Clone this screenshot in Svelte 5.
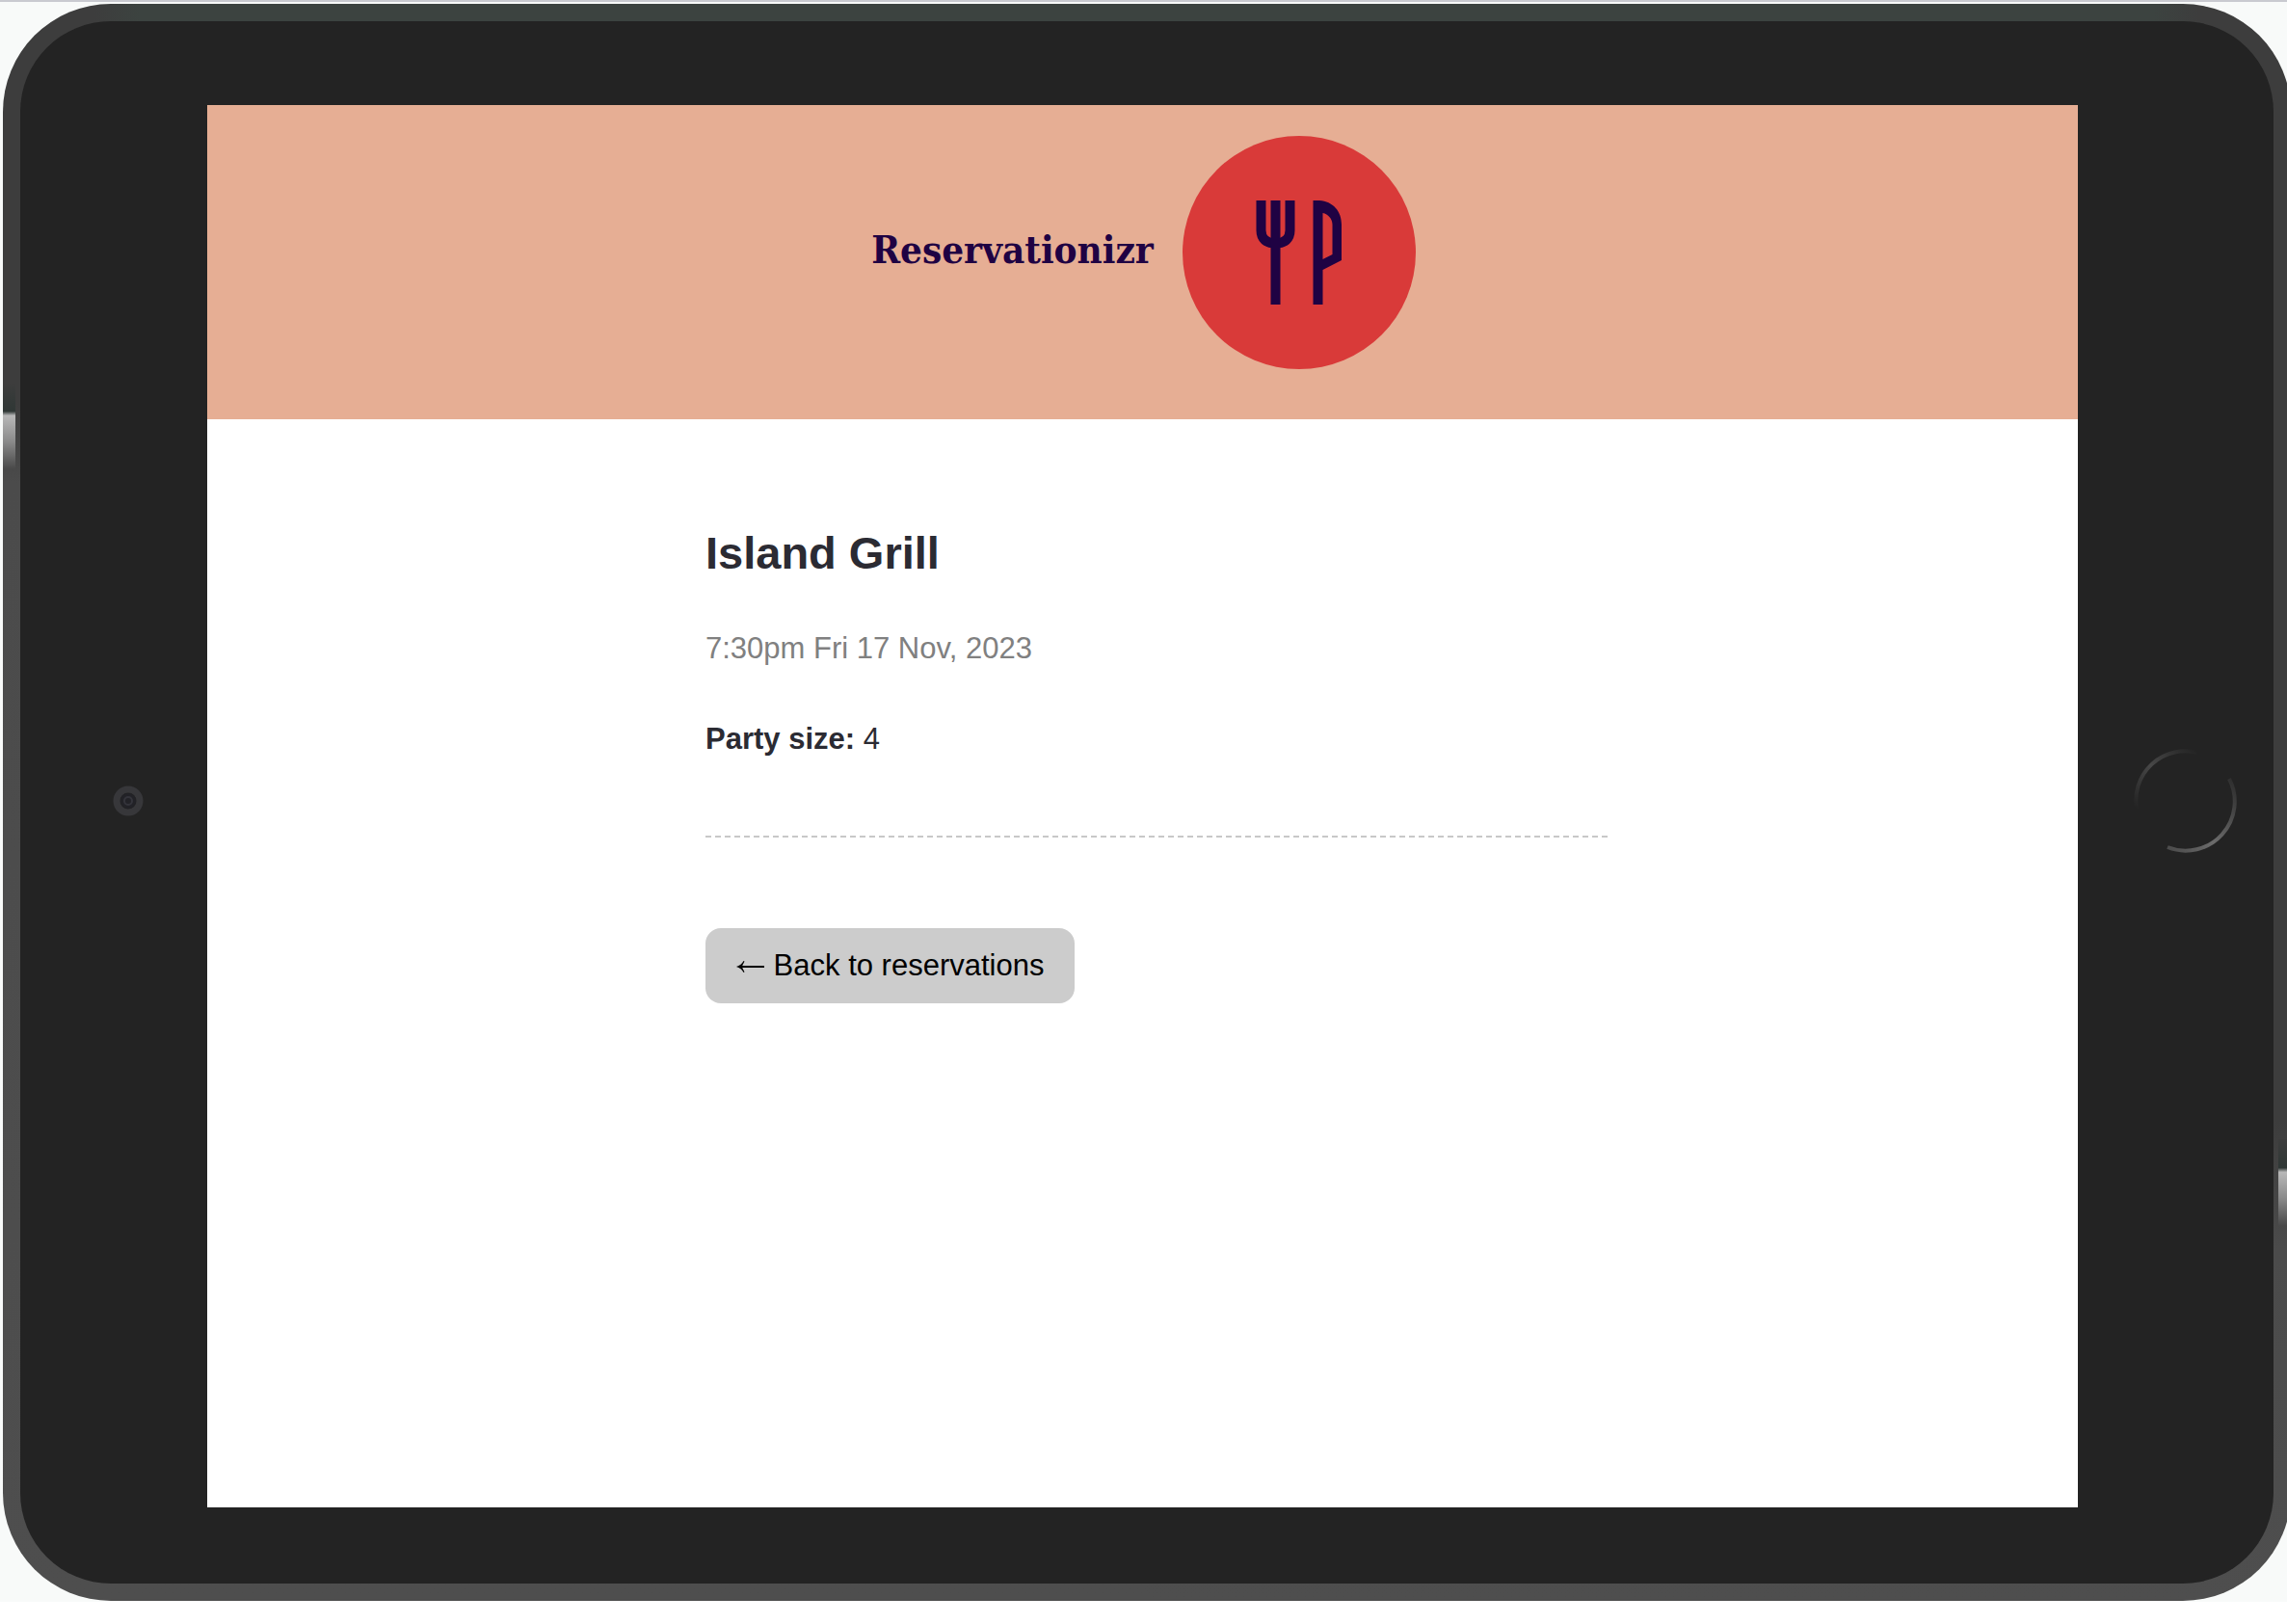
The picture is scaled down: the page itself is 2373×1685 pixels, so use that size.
<script>
  const reservation = {
    restaurant: 'Island Grill',
    time: '7:30pm Fri 17 Nov, 2023',
    partySize: 4
  };
</script>

<div class="page">
  <div class="stage">
    <div class="tablet">
      <span class="side-key key-left"></span>
      <span class="side-key key-right"></span>
      <div class="bezel">
        <div class="side left">
          <svg class="camera" viewBox="0 0 32 32" aria-hidden="true">
            <circle cx="16" cy="16" r="12" fill="none" stroke="#37373a" stroke-width="7" />
            <circle cx="16" cy="16" r="8" fill="#222227" />
            <circle cx="16" cy="16" r="4" fill="none" stroke="#34343b" stroke-width="2" />
          </svg>
        </div>

        <div class="screen">
          <header>
            <span class="brand">Reservationizr</span>
            <svg class="logo" viewBox="0 0 242 242" aria-hidden="true">
              <circle cx="121" cy="121" r="121" fill="#d93a39" />
              <g fill="none" stroke="#1f0243" stroke-width="10">
                <path d="M81.5 67V98C81.5 107 87 111.500 96.500 111.500S111.500 107 111.500 98V67" />
                <path d="M96.500 67V175" />
              </g>
              <path
                fill="#1f0243"
                fill-rule="evenodd"
                d="M135.500 67H142C156 68 165 78 165 92V129L145.500 139V175H135.500ZM145.500 80V128L155.500 123V92C155.500 86 151 81 145.500 80Z"
              />
            </svg>
          </header>

          <main>
            <h1>{reservation.restaurant}</h1>
            <p class="time">{reservation.time}</p>
            <p class="party"><strong>Party size:</strong> {reservation.partySize}</p>
            <hr />
            <a class="back" href="#reservations">
              <svg class="arrow" viewBox="0 0 30 14" aria-hidden="true">
                <path d="M4 7H29" fill="none" stroke="#000" stroke-width="2" />
                <path d="M0 7C3.500 6 6 4 7.500 1L8.500 1.500C7.500 3.500 6.500 5 6 7C6.500 9 7.500 10.500 8.500 12.500L7.500 13C6 10 3.500 8 0 7Z" />
              </svg>
              Back to reservations
            </a>
          </main>
        </div>

        <div class="side right">
          <button class="home" type="button" aria-label="Home">
            <svg viewBox="0 0 108 108" aria-hidden="true">
              <defs>
                <linearGradient id="upper" x1="0" y1="1" x2="1" y2="0">
                  <stop offset="0" stop-color="#232323" />
                  <stop offset="0.5" stop-color="#474747" />
                  <stop offset="1" stop-color="#232323" />
                </linearGradient>
                <linearGradient id="lower" x1="0" y1="1" x2="1" y2="0">
                  <stop offset="0" stop-color="#4a4a4a" />
                  <stop offset="0.4" stop-color="#6c6c6c" />
                  <stop offset="1" stop-color="#2c2c2c" />
                </linearGradient>
              </defs>
              <g fill="none" stroke-width="4">
                <path d="M3 62A51 51 0 0 1 66 4" stroke="url(#upper)" />
                <path d="M35 102A51 51 0 0 0 99 31" stroke="url(#lower)" />
              </g>
            </svg>
          </button>
        </div>
      </div>
    </div>
  </div>
</div>

<style>
  :global(body) {
    margin: 0;
    background: #fff;
  }

  .page {
    box-sizing: border-box;
    display: flex;
    flex-direction: column;
    min-height: 100vh;
    padding-bottom: 23px;
    overflow: hidden;
    font-family: 'Liberation Sans', Arial, sans-serif;
    color: #2b2b33;
  }

  .stage {
    flex: 1;
    display: flex;
    margin-right: -4px;
    padding: 2px 0 1px 3px;
    border-top: 2px solid #c9cad0;
    background: #f8faf9;
  }

  .tablet {
    position: relative;
    flex: 1;
    display: flex;
    padding: 18px;
    border-radius: 112px;
    overflow: hidden;
    background:
      linear-gradient(90deg, transparent 4%, #3c4340 6%, #3c4340 94%, transparent 96%) top / 100% 18px no-repeat,
      linear-gradient(#3d3d3d 25%, #4b4b4b 30%, #4e4e4e) left / 50% 100% no-repeat,
      linear-gradient(#3d3d3d 70%, #4b4b4b 78%, #4e4e4e) right / 50% 100% no-repeat;
  }

  .side-key {
    position: absolute;
    width: 13px;
    height: 90px;
    background: linear-gradient(#3d3d3d, #2f3735 33%, #b8b8b8 38%, #8a8a8a 68%, #484848);
  }

  .key-left {
    top: 393px;
    left: 0;
  }

  .key-right {
    top: 1178px;
    right: 0;
  }

  .bezel {
    flex: 1;
    display: flex;
    border-radius: 94px;
    background: #232323;
  }

  .side {
    box-sizing: border-box;
    flex: none;
    display: flex;
    align-items: center;
    justify-content: center;
    padding-bottom: 3px;
  }

  .left {
    width: 194px;
    padding-left: 30px;
  }

  .right {
    width: 203px;
    padding-left: 21px;
  }

  .camera {
    width: 32px;
    height: 32px;
  }

  .home {
    width: 108px;
    height: 108px;
    padding: 0;
    border: 0;
    border-radius: 50%;
    background: none;
  }

  .home svg {
    display: block;
  }

  .screen {
    flex: 1;
    margin: 87px 0 79px;
    background: #fff;
  }

  header {
    display: flex;
    align-items: center;
    justify-content: center;
    gap: 30px;
    padding: 32px 0 52px 2px;
    background: #e6ae94;
  }

  .brand {
    padding-bottom: 6px;
    font-family: 'DejaVu Serif Condensed', 'DejaVu Serif', serif;
    font-size: 40px;
    font-weight: 700;
    line-height: 48px;
    color: #1f0243;
  }

  .logo {
    width: 242px;
    height: 242px;
  }

  main {
    max-width: 936px;
    margin: 0 auto;
    padding: 111px 0 111px 29px;
    font-size: 31px;
    line-height: 36px;
  }

  h1 {
    margin: 0 0 53px;
    font-size: 47px;
    line-height: 56px;
  }

  p {
    margin: 0 0 58px;
  }

  .time {
    color: #808080;
  }

  hr {
    margin: 82px 0 94px;
    border: 0;
    border-top: 2px dashed #c8c8c8;
  }

  .back {
    display: inline-block;
    padding: 21px 32px;
    border-radius: 16px;
    background: #ccc;
    color: #000;
    text-decoration: none;
  }

  .arrow {
    width: 30px;
    height: 14px;
    vertical-align: 2px;
  }
</style>
